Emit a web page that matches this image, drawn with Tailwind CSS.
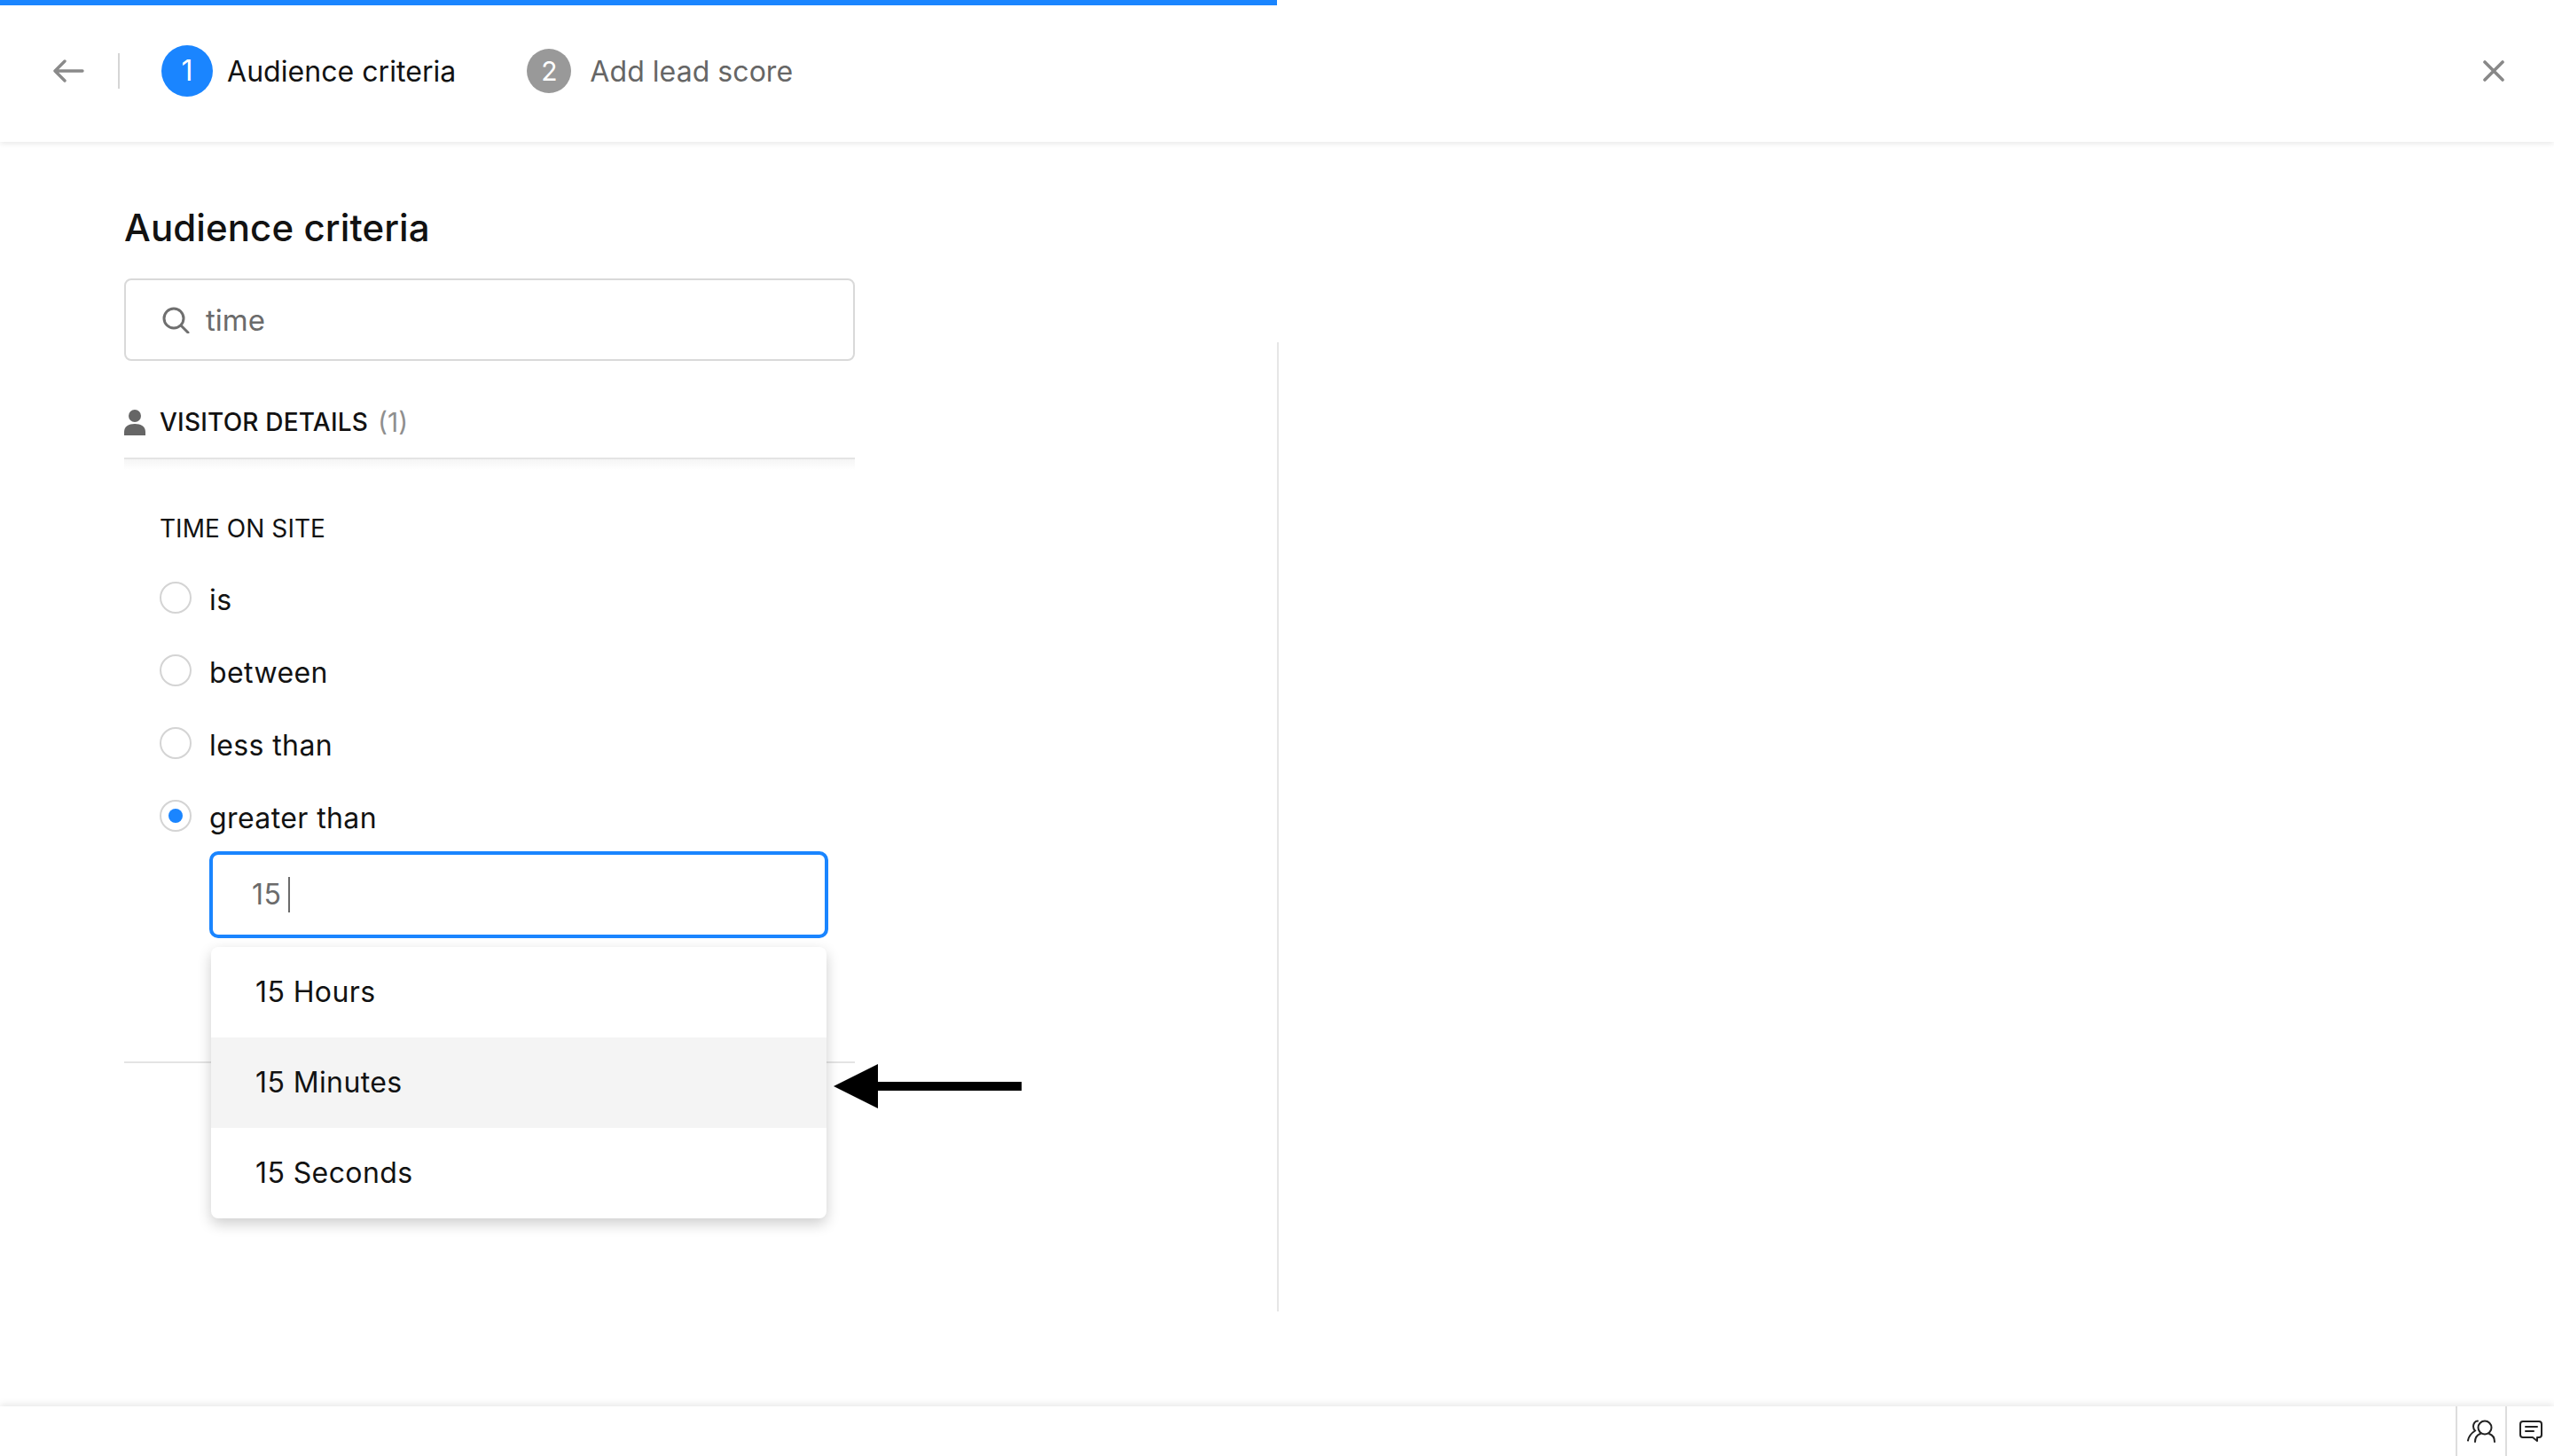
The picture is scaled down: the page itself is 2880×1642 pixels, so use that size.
<!DOCTYPE html>
<html lang="en">
<head>
  <meta charset="UTF-8">
  <title>Audience criteria</title>
  <script src="https://cdn.jsdelivr.net/npm/@tailwindcss/browser@4"></script>
</head>
<body class="bg-white font-['Inter',sans-serif] text-[#121212]">
  <div class="relative flex flex-col w-[2880px] h-[1642px] overflow-hidden">

    <!-- header -->
    <header class="relative z-10 h-[160px] shrink-0 bg-white shadow-[0_2px_6px_rgba(0,0,0,0.09)]">
      <div class="w-[1440px] h-[6px] bg-[#1a85ff]"></div>
      <div class="flex items-center h-[148px] pl-[60px] pr-[56px]">
        <svg class="w-[35px] h-[26px] text-[#8a8a8a]" viewBox="0 0 35 26" fill="none" stroke="currentColor" stroke-width="3.4" stroke-linecap="round" stroke-linejoin="round"><path d="M33 13H3M13 2 2 13l11 11"/></svg>
        <div class="w-[2px] h-[40px] ml-[38px] bg-[#d6d6d6]"></div>
        <div class="flex items-center justify-center w-[58px] h-[58px] ml-[47px] rounded-full bg-[#1a85ff] text-white text-[32px]">1</div>
        <span class="ml-[16px] pt-[2px] text-[32px] leading-none tracking-[0.05px]">Audience criteria</span>
        <div class="flex items-center justify-center w-[50px] h-[50px] ml-[80px] rounded-full bg-[#999999] text-white text-[30px]">2</div>
        <span class="ml-[21px] pt-[2px] text-[32px] leading-none tracking-[0.05px] text-[#666666]">Add lead score</span>
        <svg class="w-[24px] h-[24px] ml-auto text-[#888888]" viewBox="0 0 24 24" fill="none" stroke="currentColor" stroke-width="3.6" stroke-linecap="round"><path d="M2 2l20 20M22 2 2 22"/></svg>
      </div>
    </header>

    <!-- main -->
    <main class="flex flex-1 min-h-0">
      <div class="w-[1440px] shrink-0 pl-[140px]">
        <div class="w-[824px]">
          <h1 class="h-[60px] mt-[67px] text-[42px] leading-[60px] font-medium tracking-[0.1px]">Audience criteria</h1>
          <div class="flex items-center h-[93px] mt-[27px] pl-[41px] border-2 border-[#d9d9d9] rounded-[8px]">
            <svg class="w-[31px] h-[30px] text-[#6f6f6f]" viewBox="0 0 31 30" fill="none" stroke="currentColor" stroke-width="3" stroke-linecap="round"><circle cx="13" cy="13" r="11"/><path d="M21 21l8 8"/></svg>
            <span class="ml-[18px] pt-[2px] text-[33px] text-[#6b6b6b]">time</span>
          </div>

          <div class="flex items-center h-[84px] mt-[27px] pt-[2px] border-b-2 border-[#e4e4e4]">
            <svg class="w-[24px] h-[29px] text-[#666666]" viewBox="0 0 24 29" fill="currentColor"><circle cx="12" cy="7" r="7"/><path d="M0 29v-4c0-6 5-9 12-9s12 3 12 9v4z"/></svg>
            <span class="ml-[16px] text-[28px] font-medium tracking-[0.2px]">VISITOR DETAILS</span>
            <span class="ml-[11px] text-[30px] text-[#8f8f8f]">(1)</span>
          </div>
          <div class="h-[12px] bg-gradient-to-b from-[#f5f5f5] to-white"></div>

          <div class="pl-[40px] pt-[33px]">
            <div class="h-[65px] mb-[5px] flex items-center text-[28px] tracking-[0.05px]">TIME ON SITE</div>
            <div class="flex items-center h-[82px]">
              <span class="w-[36px] h-[36px] rounded-full border-2 border-[#d4d4d4]"></span>
              <span class="ml-[20px] pt-[5px] text-[32px] tracking-[0.4px]">is</span>
            </div>
            <div class="flex items-center h-[82px]">
              <span class="w-[36px] h-[36px] rounded-full border-2 border-[#d4d4d4]"></span>
              <span class="ml-[20px] pt-[5px] text-[32px] tracking-[0.4px]">between</span>
            </div>
            <div class="flex items-center h-[82px]">
              <span class="w-[36px] h-[36px] rounded-full border-2 border-[#d4d4d4]"></span>
              <span class="ml-[20px] pt-[5px] text-[32px] tracking-[0.4px]">less than</span>
            </div>
            <div class="flex items-center h-[82px]">
              <span class="flex items-center justify-center w-[36px] h-[36px] rounded-full border-2 border-[#d4d4d4]">
                <span class="w-[16px] h-[16px] rounded-full bg-[#1a85ff]"></span>
              </span>
              <span class="ml-[20px] pt-[5px] text-[32px] tracking-[0.4px]">greater than</span>
            </div>
            <div class="flex items-center w-[698px] h-[98px] -mt-[1px] ml-[56px] pl-[44px] border-4 border-[#1a85ff] rounded-[10px]">
              <span class="text-[32px] text-[#6b6b6b] tracking-[0.4px]">15</span>
              <span class="w-[2px] h-[40px] ml-[8px] bg-[#6b6b6b]"></span>
            </div>
          </div>
          <div class="h-[2px] mt-[139px] bg-[#e4e4e4]"></div>
        </div>
      </div>
      <div class="w-[2px] h-[1093px] mt-[226px] bg-[#e6e6e6]"></div>
    </main>

    <!-- dropdown over the form -->
    <div class="absolute z-20 left-[238px] top-[1068px] w-[694px] rounded-[8px] bg-white overflow-hidden shadow-[0_6px_16px_rgba(0,0,0,0.2)]">
      <div class="flex items-center h-[102px] pl-[50px] text-[32px] tracking-[0.4px]">15 Hours</div>
      <div class="flex items-center h-[102px] pl-[50px] text-[32px] tracking-[0.4px] bg-[#f4f4f4]">15 Minutes</div>
      <div class="flex items-center h-[102px] pl-[50px] text-[32px] tracking-[0.4px]">15 Seconds</div>
    </div>

    <!-- annotation arrow -->
    <svg class="absolute z-30 left-[940px] top-[1200px] w-[212px] h-[50px]" viewBox="0 0 212 50" fill="#000"><path d="M0 25 50 0v20h162v10H50v20z"/></svg>

    <!-- footer -->
    <footer class="relative z-10 flex justify-end h-[56px] shrink-0 bg-white shadow-[0_-2px_8px_rgba(0,0,0,0.1)]">
      <div class="flex items-center justify-center w-[56px] h-full border-l-2 border-[#dddddd]">
        <svg class="w-[32px] h-[26px] text-[#222222]" viewBox="0 0 32 26" fill="none" stroke="currentColor" stroke-width="2" stroke-linecap="round"><circle cx="20" cy="9" r="7.500"/><path d="M9 25c0-5 3-8 6-9M31 25c0-5-3-8-6-9M12 1.500c-3 0-5 3-5 6 0 2 1 4 2 5-3 2-7 5-8 11"/></svg>
      </div>
      <div class="flex items-center justify-center w-[55px] h-full border-l-2 border-[#dddddd]">
        <svg class="w-[26px] h-[26px] text-[#222222]" viewBox="0 0 26 26" fill="none" stroke="currentColor" stroke-width="2" stroke-linejoin="round" stroke-linecap="round"><path d="M4 2h18a3 3 0 0 1 3 3v12a3 3 0 0 1-3 3h-2v4l-5-4H4a3 3 0 0 1-3-3V5a3 3 0 0 1 3-3z"/><path d="M7 8h13M7 13h9"/></svg>
      </div>
    </footer>
  </div>
</body>
</html>
